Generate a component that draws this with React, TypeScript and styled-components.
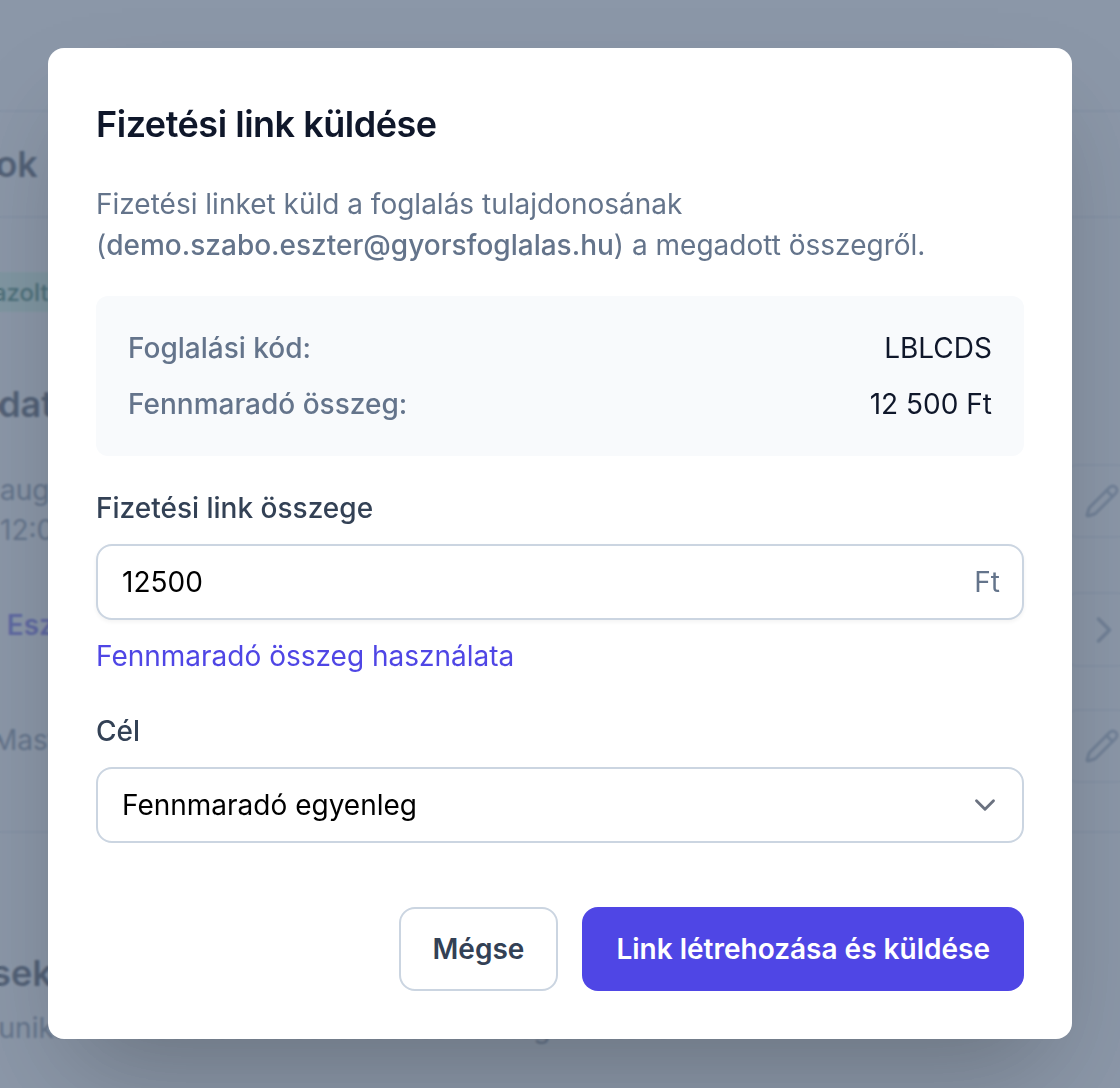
import React from 'react';
import styled, { createGlobalStyle } from 'styled-components';
import { ChevronDown, ChevronRight, Pencil } from 'lucide-react';

const GlobalStyle = createGlobalStyle`
  html, body {
    margin: 0;
    padding: 0;
    background: #fff;
    font-family: Inter, 'Liberation Sans', sans-serif;
  }
  * { box-sizing: border-box; }
`;

const Page = styled.div`
  width: 1120px;
  height: 1088px;
  overflow: hidden;
  background: #fff;
`;

const TopBar = styled.div`
  height: 112px;
  border-bottom: 2px solid #e2e8f0;
`;

const PageHeader = styled.div`
  height: 106px;
  display: flex;
  align-items: center;
  border-bottom: 2px solid #e2e8f0;
  font-size: 36px;
  font-weight: 600;
  color: #1e293b;
  white-space: nowrap;
`;

const PageTitle = styled.div`
  margin-left: -149px;
`;

const Badge = styled.div`
  margin: 54px 0 0 -120px;
  width: 400px;
  height: 40px;
  padding-left: 16px;
  display: flex;
  align-items: center;
  background: #d1fae5;
  color: #065f46;
  font-size: 24px;
  font-weight: 500;
`;

const SectionTitle = styled.div`
  margin: 70px 0 0 -176px;
  height: 44px;
  line-height: 44px;
  font-size: 36px;
  font-weight: 600;
  color: #1e293b;
  white-space: nowrap;
`;

const DetailRow = styled.div<{ $top: number; $height: number }>`
  margin-top: ${p => p.$top}px;
  height: ${p => p.$height}px;
  display: flex;
  justify-content: space-between;
  font-size: 28px;
  line-height: 40px;
  color: #64748b;
  white-space: nowrap;
`;

const DetailText = styled.div<{ $offset: number; $pad: number; $accent?: boolean }>`
  margin-left: ${p => p.$offset}px;
  padding-top: ${p => p.$pad}px;
  color: ${p => (p.$accent ? '#4f46e5' : '#64748b')};
  font-weight: ${p => (p.$accent ? 600 : 400)};
`;

// runs off the right edge of the page, only its left end shows beside the dialog
const ActionCell = styled.div<{ $inset: number }>`
  width: 70px;
  margin-right: -12px;
  flex: none;
  display: flex;
  align-items: center;
  padding-left: ${p => p.$inset}px;
  border: 2px solid #e2e8f0;
  border-radius: 16px;
  color: #94a3b8;
`;

const SectionEnd = styled.div`
  margin-top: 48px;
  border-top: 2px solid #e2e8f0;
`;

const BottomTitle = styled.div`
  margin: 118px 0 0 -142px;
  height: 44px;
  line-height: 44px;
  font-size: 36px;
  font-weight: 600;
  color: #1e293b;
  white-space: nowrap;
`;

const BottomText = styled.div`
  margin: 13px 0 0 -85px;
  font-size: 28px;
  line-height: 40px;
  word-spacing: 4.6px;
  color: #64748b;
  white-space: nowrap;
`;

const Overlay = styled.div`
  position: fixed;
  inset: 0;
  padding: 48px;
  background: rgba(100, 116, 139, 0.75);
  backdrop-filter: blur(1px);
`;

const Modal = styled.div`
  height: 991px;
  padding: 48px;
  background: #fff;
  border-radius: 16px;
  box-shadow: 0 50px 100px -24px rgba(0, 0, 0, 0.25);
`;

const Title = styled.h2`
  margin: 0;
  font-size: 36px;
  line-height: 56px;
  font-weight: 600;
  letter-spacing: -0.48px;
  color: #0f172a;
`;

const Description = styled.p`
  margin: 32px 0 0;
  font-size: 28px;
  line-height: 41px;
  color: #64748b;

  strong {
    font-weight: 500;
  }
`;

const Summary = styled.div`
  margin-top: 30px;
  height: 160px;
  padding: 32px;
  display: flex;
  flex-direction: column;
  gap: 16px;
  background: #f8fafc;
  border-radius: 12px;
`;

const SummaryRow = styled.div`
  display: flex;
  justify-content: space-between;
  font-size: 28px;
  line-height: 40px;
`;

const SummaryLabel = styled.span`
  font-weight: 500;
  color: #64748b;
`;

const SummaryValue = styled.span`
  color: #0f172a;
`;

const Field = styled.div<{ $gap: number }>`
  margin-top: ${p => p.$gap}px;
`;

const Label = styled.label`
  display: block;
  margin-bottom: 16px;
  font-size: 28px;
  line-height: 40px;
  font-weight: 500;
  color: #334155;
`;

const InputBox = styled.div`
  height: 76px;
  padding: 0 22px 0 24px;
  display: flex;
  align-items: center;
  justify-content: space-between;
  border: 2px solid #cbd5e1;
  border-radius: 16px;
  background: #fff;
  box-shadow: 0 2px 4px rgba(0, 0, 0, 0.05);
  font-size: 28px;
  color: #000;
`;

const Suffix = styled.span`
  color: #64748b;
`;

const LinkText = styled.div`
  margin-top: 16px;
  font-size: 28px;
  line-height: 40px;
  color: #4f46e5;
`;

const SelectBox = styled(InputBox)`
  box-shadow: none;
  padding-right: 20px;
  svg {
    color: #6b7280;
  }
`;

const Footer = styled.div`
  margin-top: 64px;
  display: flex;
  justify-content: flex-end;
  gap: 24px;
`;

const Button = styled.button<{ $primary?: boolean }>`
  height: 84px;
  padding: 0 ${p => (p.$primary ? 34 : 32)}px;
  border: ${p => (p.$primary ? 'none' : '2px solid #cbd5e1')};
  border-radius: 16px;
  background: ${p => (p.$primary ? '#4f46e5' : '#fff')};
  color: ${p => (p.$primary ? '#fff' : '#334155')};
  font-family: inherit;
  font-size: 28px;
  font-weight: 600;
`;

export default function App() {
  return (
    <Page>
      <GlobalStyle />
      <TopBar />
      <PageHeader>
        <PageTitle>Foglalások</PageTitle>
      </PageHeader>
      <Badge>Visszaigazolt</Badge>
      <SectionTitle>Foglalás adatok</SectionTitle>
      <DetailRow $top={38} $height={74}>
        <DetailText $offset={-84} $pad={6}>
          2025. aug.
          <br />
          2025. 12:00
        </DetailText>
        <ActionCell $inset={20}>
          <Pencil size={36} strokeWidth={2} />
        </ActionCell>
      </DetailRow>
      <DetailRow $top={54} $height={75}>
        <DetailText $offset={-85} $accent $pad={13}>
          Szabó Eszter
        </DetailText>
        <ActionCell $inset={18}>
          <ChevronRight size={44} strokeWidth={2} />
        </ActionCell>
      </DetailRow>
      <DetailRow $top={42} $height={74}>
        <DetailText $offset={-8} $pad={11}>
          Mastercard
        </DetailText>
        <ActionCell $inset={20}>
          <Pencil size={36} strokeWidth={2} />
        </ActionCell>
      </DetailRow>
      <SectionEnd />
      <BottomTitle>Értesítések</BottomTitle>
      <BottomText>Kommunikációs beállítások és értesítések megtekintése</BottomText>
      <Overlay>
        <Modal>
          <Title>Fizetési link küldése</Title>
          <Description>
            Fizetési linket küld a foglalás tulajdonosának
            <br />
            (<strong>demo.szabo.eszter@gyorsfoglalas.hu</strong>) a megadott összegről.
          </Description>
          <Summary>
            <SummaryRow>
              <SummaryLabel>Foglalási kód:</SummaryLabel>
              <SummaryValue>LBLCDS</SummaryValue>
            </SummaryRow>
            <SummaryRow>
              <SummaryLabel>Fennmaradó összeg:</SummaryLabel>
              <SummaryValue>12 500 Ft</SummaryValue>
            </SummaryRow>
          </Summary>
          <Field $gap={32}>
            <Label>Fizetési link összege</Label>
            <InputBox>
              12500
              <Suffix>Ft</Suffix>
            </InputBox>
            <LinkText>Fennmaradó összeg használata</LinkText>
          </Field>
          <Field $gap={35}>
            <Label>Cél</Label>
            <SelectBox>
              Fennmaradó egyenleg
              <ChevronDown size={34} strokeWidth={2} />
            </SelectBox>
          </Field>
          <Footer>
            <Button>Mégse</Button>
            <Button $primary>Link létrehozása és küldése</Button>
          </Footer>
        </Modal>
      </Overlay>
    </Page>
  );
}
